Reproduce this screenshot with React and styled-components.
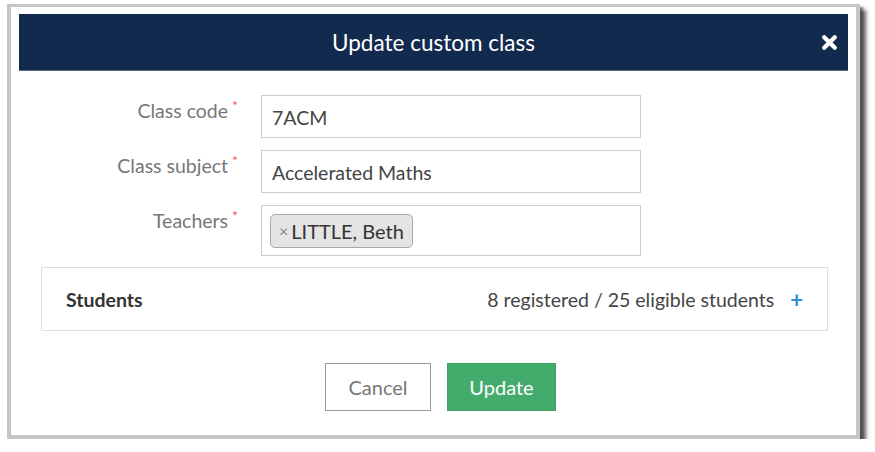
import React from 'react';
import styled, { createGlobalStyle } from 'styled-components';

const GlobalStyle = createGlobalStyle`
  html, body {
    margin: 0;
    padding: 0;
    background: #fff;
    font-family: Lato, "Open Sans", sans-serif;
  }
`;

const Frame = styled.div`
  box-sizing: border-box;
  margin: 4px 0 0 7px;
  width: 853px;
  height: 435px;
  border: 4px solid #c6c6c6;
  border-top-width: 3px;
  background: #fff;
  box-shadow: 6px 6px 4px 0 rgba(70, 70, 70, 0.85), 3px 3px 2px 0 #888;
  padding: 7px 8px 0 8px;
`;

const Header = styled.header`
  display: grid;
  grid-template-columns: 1fr auto 1fr;
  align-items: center;
  height: 56px;
  background: #132a4f;
  border-bottom: 1px solid #5d6b84;
  color: #fff;
`;

const Title = styled.h1`
  grid-column: 2;
  margin: 0;
  font-size: 22.5px;
  font-weight: normal;
`;

const Close = styled.button`
  grid-column: 3;
  justify-self: end;
  margin-right: 10px;
  padding: 0;
  border: none;
  background: none;
  display: flex;
  cursor: pointer;
`;

const Body = styled.div`
  padding: 24px 20px 0 22px;
`;

const Row = styled.div`
  display: flex;
  align-items: flex-start;
  margin-bottom: 12px;
`;

const Label = styled.label`
  box-sizing: border-box;
  width: 197px;
  padding-top: 4px;
  text-align: right;
  font-size: 19.5px;
  color: #777;
  line-height: 24px;
`;

const Required = styled.span`
  color: #ee5c5c;
  font-size: 14px;
  line-height: 14px;
  vertical-align: top;
  margin-left: 4px;
`;

const Field = styled.div`
  box-sizing: border-box;
  margin-left: 23px;
  width: 380px;
  min-height: ${(p) => (p.$tall ? '51px' : '43px')};
  border: 1px solid #ccc;
  padding: ${(p) => (p.$tall ? '6px 8px' : '1px 10px 0')};
  display: flex;
  align-items: center;
  font-size: 19.5px;
  color: #444;
`;

const Chip = styled.span`
  display: inline-flex;
  align-items: center;
  height: 34px;
  box-sizing: border-box;
  padding: 0 8px 0 8px;
  background: #e4e4e4;
  border: 1px solid #aaa;
  border-radius: 5px;
  font-size: 20px;
  color: #333;
`;

const ChipRemove = styled.span`
  color: #888;
  font-size: 16px;
  margin-right: 3px;
`;

const Panel = styled.div`
  box-sizing: border-box;
  height: 64px;
  margin-top: -1px;
  border: 1px solid #ddd;
  display: flex;
  align-items: center;
  padding: 0 24px 0 24px;
`;

const PanelTitle = styled.span`
  flex: 1;
  font-size: 19.5px;
  font-weight: bold;
  color: #333;
`;

const Count = styled.span`
  font-size: 19.5px;
  color: #444;
`;

const Add = styled.span`
  margin-left: 16px;
  color: #2b8fd9;
  font-size: 22px;
  font-weight: bold;
`;

const Actions = styled.div`
  display: flex;
  justify-content: center;
  gap: 16px;
  margin-top: 32px;
  padding-left: 12px;
`;

const Button = styled.button`
  box-sizing: border-box;
  height: 48px;
  width: ${(p) => (p.$primary ? '109px' : '106px')};
  font-family: inherit;
  font-size: 20px;
  cursor: pointer;
  border: 1px solid ${(p) => (p.$primary ? '#3f9f63' : '#999')};
  background: ${(p) => (p.$primary ? '#43ab6b' : '#fff')};
  color: ${(p) => (p.$primary ? '#fff' : '#777')};
`;

const fields = [
  { label: 'Class code', value: '7ACM' },
  { label: 'Class subject', value: 'Accelerated Maths' },
];

export default function App() {
  return (
    <>
      <GlobalStyle />
      <Frame>
        <Header>
          <Title>Update custom class</Title>
          <Close aria-label="Close">
            <svg width="17" height="17" viewBox="0 0 16 16">
              <path d="M3 3 L13 13 M13 3 L3 13" stroke="#fff" strokeWidth="4" strokeLinecap="round" />
            </svg>
          </Close>
        </Header>
        <Body>
          {fields.map((f) => (
            <Row key={f.label}>
              <Label>
                {f.label}
                <Required>*</Required>
              </Label>
              <Field>{f.value}</Field>
            </Row>
          ))}
          <Row>
            <Label>
              Teachers
              <Required>*</Required>
            </Label>
            <Field $tall>
              <Chip>
                <ChipRemove>×</ChipRemove>LITTLE, Beth
              </Chip>
            </Field>
          </Row>
          <Panel>
            <PanelTitle>Students</PanelTitle>
            <Count>8 registered / 25 eligible students</Count>
            <Add>+</Add>
          </Panel>
          <Actions>
            <Button>Cancel</Button>
            <Button $primary>Update</Button>
          </Actions>
        </Body>
      </Frame>
    </>
  );
}
